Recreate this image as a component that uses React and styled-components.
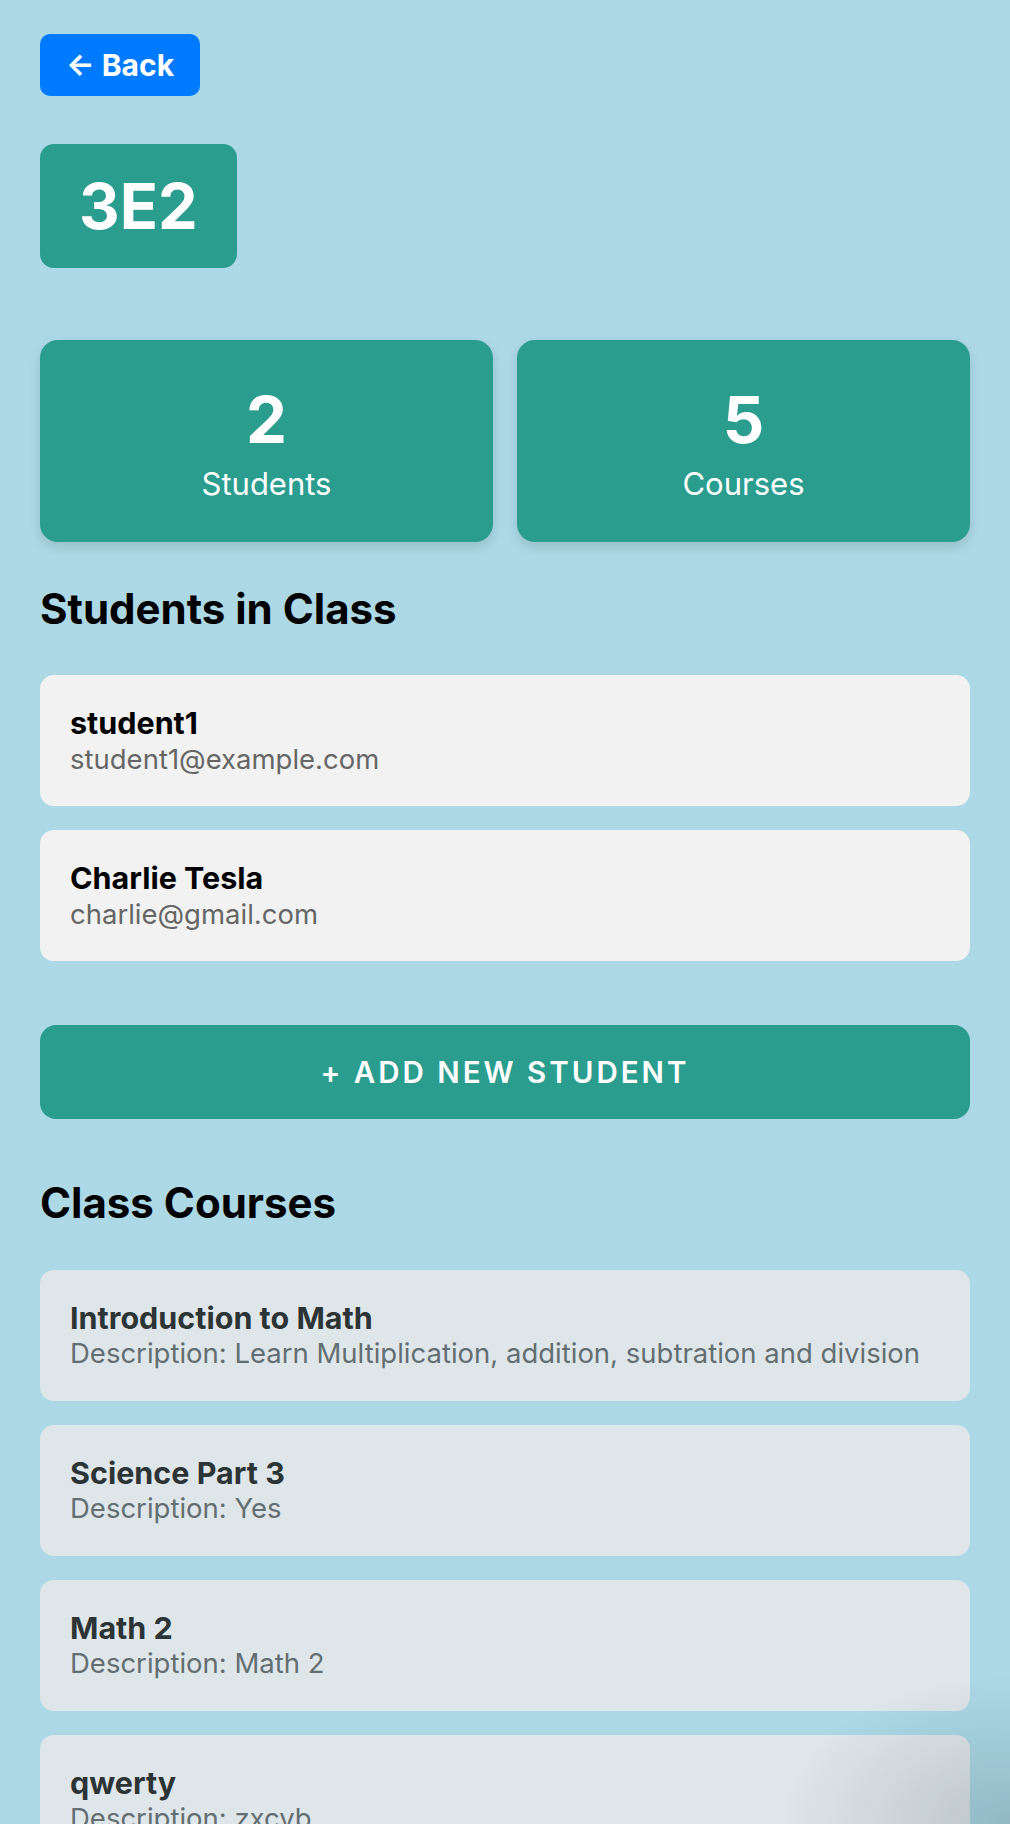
import React from "react";
import styled, { createGlobalStyle } from "styled-components";

const GlobalStyle = createGlobalStyle`
  html, body {
    margin: 0;
    padding: 0;
    background: #add8e6;
  }
  body {
    font-family: Inter, "Noto Sans", "Liberation Sans", sans-serif;
    color: #000;
  }
`;

const Page = styled.div`
  padding: 34px 40px 40px;
  display: flex;
  flex-direction: column;
  align-items: stretch;
`;

// soft dark shading in the lower right corner of the capture
const CornerShade = styled.div`
  position: fixed;
  right: 0;
  bottom: 0;
  width: 230px;
  height: 150px;
  pointer-events: none;
  background: radial-gradient(ellipse at 100% 100%, rgba(40, 60, 70, 0.2), rgba(40, 60, 70, 0) 70%);
`;

const BackButton = styled.button`
  align-self: flex-start;
  height: 62px;
  padding: 0 26px;
  border: none;
  border-radius: 10px;
  background: #007bff;
  color: #fff;
  font-family: inherit;
  font-size: 30px;
  font-weight: 700;
  cursor: pointer;
`;

const ClassBadge = styled.h1`
  align-self: flex-start;
  margin: 48px 0 0;
  height: 124px;
  padding: 0 39px;
  display: flex;
  align-items: center;
  border-radius: 14px;
  background: #2a9d8f;
  color: #fff;
  font-size: 63px;
  font-weight: 700;
`;

const StatGrid = styled.div`
  margin-top: 72px;
  display: grid;
  grid-template-columns: 1fr 1fr;
  gap: 24px;
`;

const StatCard = styled.div`
  height: 202px;
  box-sizing: border-box;
  padding-top: 6px;
  border-radius: 18px;
  background: #2a9d8f;
  color: #fff;
  display: flex;
  flex-direction: column;
  align-items: center;
  justify-content: center;
  box-shadow: 0 5px 12px rgba(0, 0, 0, 0.12);
`;

const StatNumber = styled.div`
  font-size: 65px;
  font-weight: 700;
  line-height: 1.15;
`;

const StatLabel = styled.div`
  margin-top: 6px;
  font-size: 31px;
  line-height: 1.3;
`;

const SectionTitle = styled.h2`
  margin: ${(p) => p.$top}px 0 0;
  font-size: 42px;
  font-weight: 700;
  line-height: 1.2;
`;

const List = styled.div`
  margin-top: 41px;
  display: flex;
  flex-direction: column;
  gap: 24px;
`;

const Card = styled.div`
  height: 131px;
  box-sizing: border-box;
  padding: 0 30px;
  border-radius: 14px;
  background: ${(p) => (p.$course ? "#dfe6e9" : "#f2f2f2")};
  display: flex;
  flex-direction: column;
  justify-content: center;
`;

const CardTitle = styled.div`
  font-size: 30.5px;
  font-weight: 700;
  line-height: 1.2;
  color: ${(p) => (p.$course ? "#2d3436" : "#000")};
`;

const CardText = styled.div`
  font-size: 27.5px;
  line-height: 1.25;
  color: ${(p) => (p.$course ? "#636e72" : "#666")};
`;

const AddButton = styled.button`
  margin-top: 64px;
  height: 94px;
  border: none;
  border-radius: 16px;
  background: #2a9d8f;
  color: #fff;
  font-family: inherit;
  font-size: 29.5px;
  font-weight: 600;
  letter-spacing: 3px;
  text-transform: uppercase;
  cursor: pointer;
`;

const students = [
  { name: "student1", email: "student1@example.com" },
  { name: "Charlie Tesla", email: "charlie@gmail.com" },
];

const courses = [
  { title: "Introduction to Math", desc: "Learn Multiplication, addition, subtration and division" },
  { title: "Science Part 3", desc: "Yes" },
  { title: "Math 2", desc: "Math 2" },
  { title: "qwerty", desc: "zxcvb" },
  { title: "History", desc: "World history" },
];

export default function App() {
  return (
    <>
      <GlobalStyle />
      <Page>
        <BackButton>← Back</BackButton>
        <ClassBadge>3E2</ClassBadge>

        <StatGrid>
          <StatCard>
            <StatNumber>{students.length}</StatNumber>
            <StatLabel>Students</StatLabel>
          </StatCard>
          <StatCard>
            <StatNumber>{courses.length}</StatNumber>
            <StatLabel>Courses</StatLabel>
          </StatCard>
        </StatGrid>

        <SectionTitle $top={42}>Students in Class</SectionTitle>
        <List>
          {students.map((s) => (
            <Card key={s.email}>
              <CardTitle>{s.name}</CardTitle>
              <CardText>{s.email}</CardText>
            </Card>
          ))}
        </List>

        <AddButton>+ Add New Student</AddButton>

        <SectionTitle $top={59}>Class Courses</SectionTitle>
        <List>
          {courses.map((c) => (
            <Card $course key={c.title}>
              <CardTitle $course>{c.title}</CardTitle>
              <CardText $course>Description: {c.desc}</CardText>
            </Card>
          ))}
        </List>
      </Page>
      <CornerShade />
    </>
  );
}
